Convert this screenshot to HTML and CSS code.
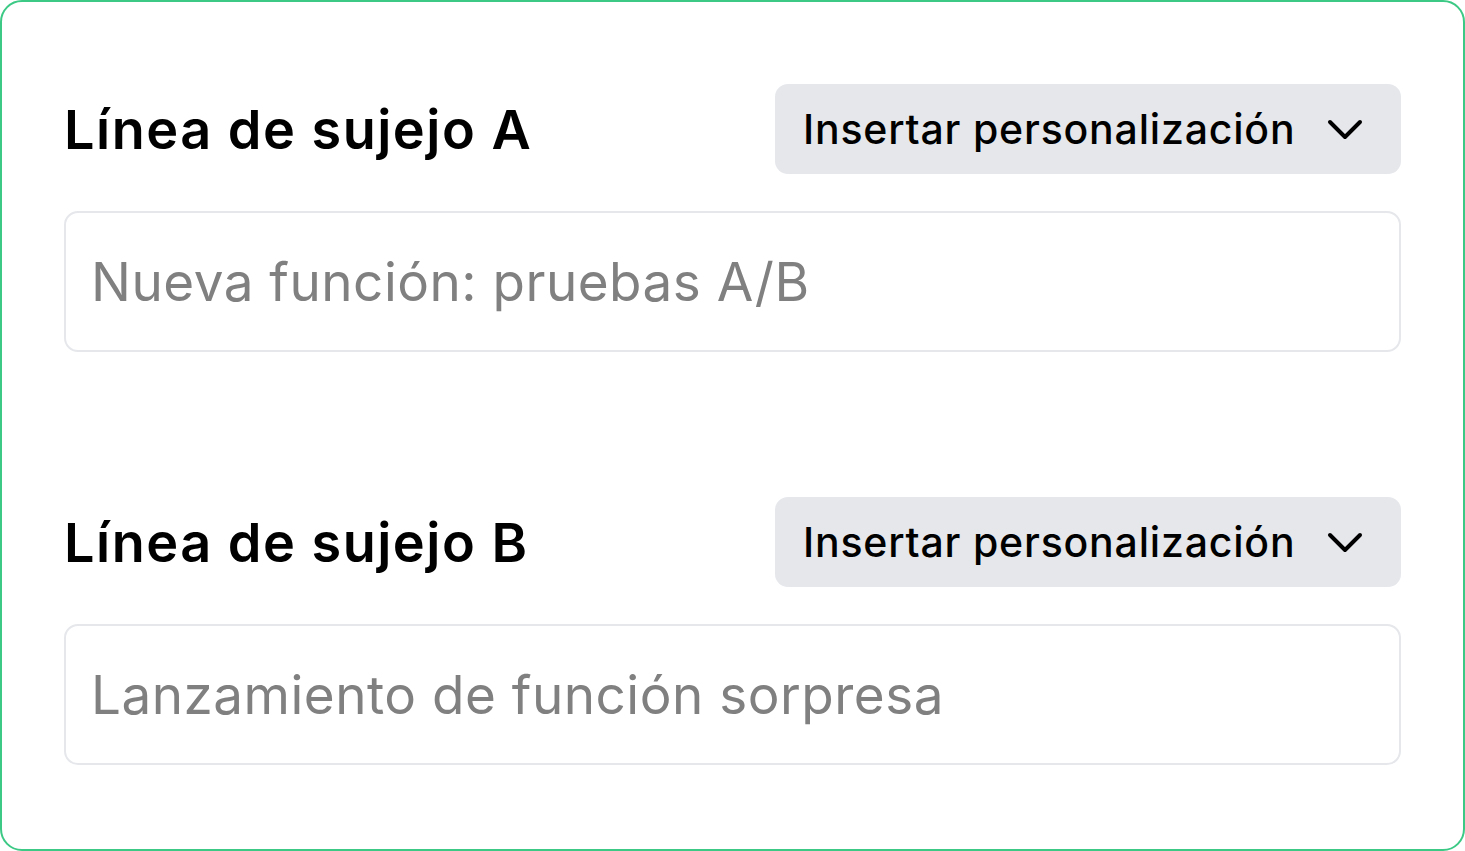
FILE: index.html
```html
<!DOCTYPE html>
<html lang="es">
<head>
<meta charset="utf-8">
<link rel="stylesheet" href="styles.css">
</head>
<body>
<div class="card">
  <section class="field">
    <div class="field-head">
      <h2 class="field-title">Línea de sujejo A</h2>
      <button class="insert-btn" type="button">
        <span class="btn-label">Insertar personalización</span>
        <svg class="chev" width="36" height="22" viewBox="0 0 36 22" fill="none"><path d="M3 3 L18 18 L33 3" stroke="#000" stroke-width="4" stroke-linecap="round" stroke-linejoin="round"/></svg>
      </button>
    </div>
    <div class="input-box"><span class="placeholder">Nueva función: pruebas A/B</span></div>
  </section>
  <section class="field">
    <div class="field-head">
      <h2 class="field-title">Línea de sujejo B</h2>
      <button class="insert-btn" type="button">
        <span class="btn-label">Insertar personalización</span>
        <svg class="chev" width="36" height="22" viewBox="0 0 36 22" fill="none"><path d="M3 3 L18 18 L33 3" stroke="#000" stroke-width="4" stroke-linecap="round" stroke-linejoin="round"/></svg>
      </button>
    </div>
    <div class="input-box"><span class="placeholder">Lanzamiento de función sorpresa</span></div>
  </section>
</div>
</body>
</html>
```

FILE: styles.css
```css
* { box-sizing: border-box; }
html, body { margin: 0; padding: 0; background: #fff; }
body { font-family: Inter, "Noto Sans", sans-serif; color: #000; }
.card {
  width: 1465px;
  height: 851px;
  border: 2px solid #3cc985;
  border-radius: 22px;
  padding: 82px 62px 0 62px;
  display: flex;
  flex-direction: column;
  gap: 145px;
}
.field { display: flex; flex-direction: column; gap: 37px; }
.field-head {
  display: flex;
  align-items: center;
  justify-content: space-between;
  height: 90px;
}
.field-title {
  margin: 0;
  font-size: 54px;
  font-weight: 600;
  letter-spacing: 1.5px;
  white-space: nowrap;
}
.insert-btn {
  height: 90px;
  width: 626px;
  border: none;
  border-radius: 13px;
  background: #e5e7eb;
  display: flex;
  align-items: center;
  padding: 0 40px 0 28px;
  gap: 32px;
  font-family: inherit;
  font-size: 41px;
  font-weight: 500;
  letter-spacing: 0.8px;
  color: #000;
  white-space: nowrap;
}
.btn-label { flex: none; }
.chev { flex: none; margin-top: 2px; }
.input-box {
  height: 141px;
  border: 2px solid #e5e7eb;
  border-radius: 14px;
  display: flex;
  align-items: center;
  padding: 0 25px;
}
.placeholder {
  font-size: 53px;
  color: #808080;
  font-weight: 400;
  letter-spacing: 0.5px;
  white-space: nowrap;
}
```
